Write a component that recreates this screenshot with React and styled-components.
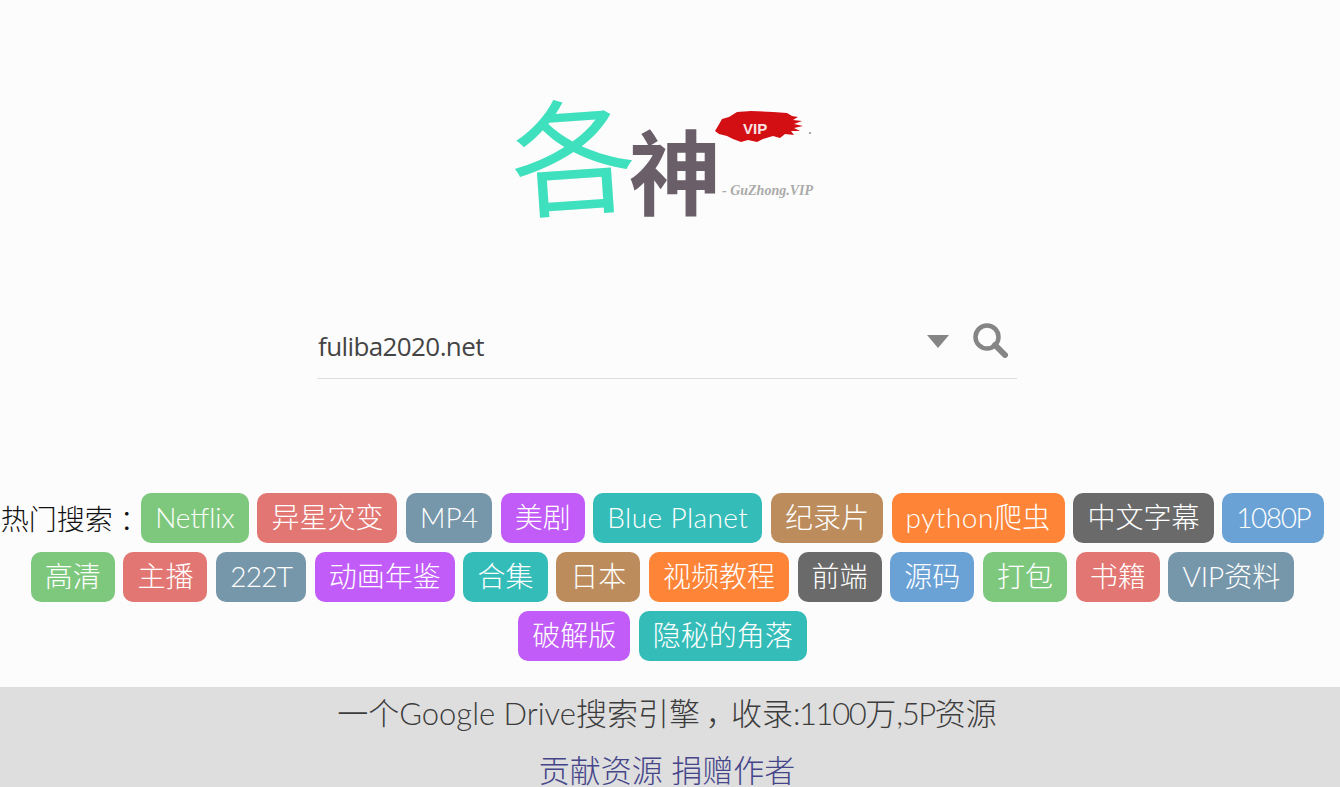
import React from "react";
import styled, { createGlobalStyle } from "styled-components";

const FONT = `Lato, "Noto Sans CJK SC", sans-serif`;
const COLORS = ["#7ec87e", "#e27672", "#7696aa", "#c25cf8", "#34bcb9", "#bc8c5c", "#fe8438", "#6a6a6a", "#6aa2d6"];
const TAGS = [
  { text: "Netflix" }, { text: "异星灾变" }, { text: "MP4" }, { text: "美剧" }, { text: "Blue Planet", spacing: 0.4 },
  { text: "纪录片" }, { text: "python爬虫", spacing: 0.5 }, { text: "中文字幕" }, { text: "1080P", spacing: -1.4 },
  { text: "高清" }, { text: "主播" }, { text: "222T", spacing: -0.75 }, { text: "动画年鉴" }, { text: "合集" },
  { text: "日本" }, { text: "视频教程" }, { text: "前端" }, { text: "源码" }, { text: "打包" }, { text: "书籍" },
  { text: "VIP资料" }, { text: "破解版" }, { text: "隐秘的角落" },
];

const Global = createGlobalStyle`
  html, body {
    margin: 0;
    height: 100%;
    overflow: hidden;
    background: #fcfcfc;
  }
  body {
    font-family: ${FONT};
    font-weight: 300;
  }
`;

const Logo = () => (
  <LogoSvg viewBox="-10 -10 340 210" width="340" height="210">
    <text x="5" y="155" fontSize="125" fontWeight="400" fill="#3fe0bd" fontFamily='"Noto Sans CJK SC"' transform="rotate(-4 65 100)">各</text>
    <text x="124" y="158" fontSize="92" fontWeight="700" fill="#6a5f69" fontFamily='"Noto Sans CJK SC"'>神</text>
    <path
      d="M213 76L217 69L224 67L232 62L246 61L268 62L282 63L287 66L293 67L288 70L297 71L289 74L298 76L289 78L295 81L286 81L289 85L280 84L275 88L268 86L258 89L252 92L243 90L236 92L228 89L222 86L214 84L210 81Z"
      fill="#d40f14"
    />
    <text x="238" y="84" fontSize="15" fontWeight="700" fill="#f8e4e4" fontFamily="'Liberation Sans'">VIP</text>
    <circle cx="305" cy="83" r="1" fill="#888" />
    <text x="217" y="145" fontSize="14" fontWeight="700" fill="#aaaaaa" fontFamily="'Liberation Serif'" fontStyle="italic">- GuZhong.VIP</text>
  </LogoSvg>
);

export default function App() {
  return (
    <Page>
      <Global />
      <LogoRow>
        <Logo />
      </LogoRow>
      <SearchBar>
        <SearchInput readOnly value="fuliba2020.net" />
        <Caret />
        <SearchIcon viewBox="0 0 36 36" width="36" height="36">
          <circle cx="15" cy="15" r="11.5" fill="none" stroke="#858585" strokeWidth="4.5" />
          <path d="M23 23l10 10" stroke="#858585" strokeWidth="6" strokeLinecap="round" />
        </SearchIcon>
      </SearchBar>
      <Tags>
        <Label>热门搜索<Punct>：</Punct></Label>
        {TAGS.map((t, i) => (
          <Tag key={t.text} $color={COLORS[i % COLORS.length]} $spacing={t.spacing || 0}>{t.text}</Tag>
        ))}
      </Tags>
      <Footer>
        <FooterLine>
          一个Google Drive搜索引擎<Punct>，</Punct>收录<Num>:1100</Num>万<Num>,5P</Num>资源
        </FooterLine>
        <FooterLine>
          <FooterLink>贡献资源</FooterLink> <FooterLink>捐赠作者</FooterLink>
        </FooterLine>
      </Footer>
    </Page>
  );
}

const Page = styled.div`
  display: flex;
  flex-direction: column;
  align-items: center;
`;
const LogoRow = styled.div`
  display: flex;
  justify-content: center;
  box-sizing: border-box;
  padding: 40px 10px 0 0;
  height: 319px;
  width: 100%;
`;
const LogoSvg = styled.svg`
  display: block;
`;
const SearchBar = styled.div`
  display: flex;
  align-items: center;
  width: 700px;
  height: 59px;
  margin-right: 6px;
  border-bottom: 1px solid #dfdfdf;
`;
const SearchInput = styled.input`
  flex: 1;
  min-width: 0;
  border: 0;
  outline: 0;
  padding: 0 0 6px 1px;
  background: transparent;
  font-family: "Open Sans", "Noto Sans CJK SC", sans-serif;
  font-size: 26px;
  font-weight: 400;
  color: #444;
  height: 53px;
  letter-spacing: -0.6px;
`;
const Caret = styled.div`
  width: 0;
  height: 0;
  border-left: 11px solid transparent;
  border-right: 11px solid transparent;
  border-top: 13px solid #858585;
  margin: 0 23px 14px 0;
`;
const SearchIcon = styled.svg`
  display: block;
  margin: 0 9px 18px 0;
`;
const Tags = styled.div`
  display: flex;
  flex-wrap: wrap;
  justify-content: center;
  align-items: center;
  align-content: flex-start;
  gap: 9px 8.7px;
  box-sizing: border-box;
  width: 100%;
  height: 194px;
  margin-top: 114px;
  padding-right: 15px;
`;
const Label = styled.span`
  font-size: 28px;
  color: #111;
  margin-right: -8.2px;
`;
const Punct = styled.span`
  display: inline-block;
  width: 1em;
  text-align: center;
  font-feature-settings: "palt";
  vertical-align: bottom;
`;
const Num = styled.span`
  letter-spacing: -1.4px;
`;
const Tag = styled.span`
  display: inline-block;
  height: 50px;
  line-height: 48px;
  padding: 0 14px;
  border-radius: 10px;
  font-size: 28px;
  color: #fff;
  white-space: nowrap;
  letter-spacing: ${(p) => p.$spacing}px;
  background: ${(p) => p.$color};
`;
const Footer = styled.div`
  box-sizing: border-box;
  width: 100%;
  padding-right: 6px;
  background: #dedede;
  text-align: center;
`;
const FooterLine = styled.div`
  font-size: 31px;
  line-height: 53px;
  margin-bottom: 4px;
  color: #3c3c3c;
`;
const FooterLink = styled.a`
  color: #45458a;
`;
